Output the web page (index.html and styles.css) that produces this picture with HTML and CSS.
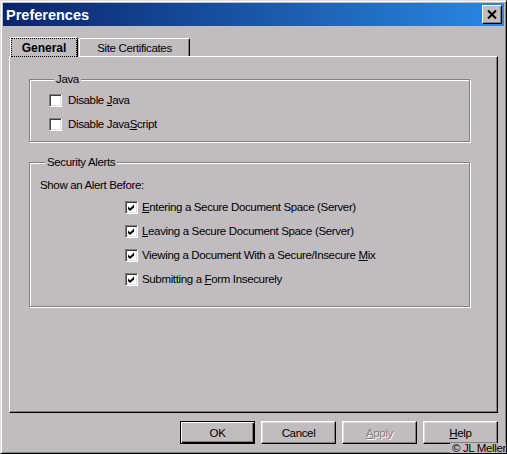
FILE: index.html
```
<!DOCTYPE html>
<html lang="en">
<head>
  <meta charset="UTF-8">
  <meta name="viewport" content="width=device-width, initial-scale=1.0">
  <title>Preferences</title>
  <link rel="stylesheet" href="styles.css">
</head>
<body>
  <div class="window">
    <div class="titlebar">
      <span class="title">Preferences</span>
      <span class="close-btn">
        <svg width="10" height="9" viewBox="0 0 10 9"><path d="M1 0.5 L9 8.5 M9 0.5 L1 8.5" stroke="#000" stroke-width="2"/></svg>
      </span>
    </div>

    <div class="content">
      <div class="tabs">
        <div class="tab active"><span class="focus">General</span></div>
        <div class="tab site">Site Certificates</div>
      </div>

      <div class="panel">
        <fieldset class="group group-java">
          <legend>Java</legend>
          <label class="option"><span class="check"></span><span>Disable <u>J</u>ava</span></label>
          <label class="option"><span class="check"></span><span>Disable Java<u>S</u>cript</span></label>
        </fieldset>

        <fieldset class="group group-alerts">
          <legend>Security Alerts</legend>
          <div class="intro">Show an Alert Before:</div>
          <div class="alert-list">
            <label class="option"><span class="check"><svg width="9" height="9" viewBox="0 0 9 9"><path d="M1 3.5 L3 5.5 L7 1.5 V4.5 L3 8 L1 6 Z"/></svg></span><span><u>E</u>ntering a Secure Document Space (Server)</span></label>
            <label class="option"><span class="check"><svg width="9" height="9" viewBox="0 0 9 9"><path d="M1 3.5 L3 5.5 L7 1.5 V4.5 L3 8 L1 6 Z"/></svg></span><span><u>L</u>eaving a Secure Document Space (Server)</span></label>
            <label class="option"><span class="check"><svg width="9" height="9" viewBox="0 0 9 9"><path d="M1 3.5 L3 5.5 L7 1.5 V4.5 L3 8 L1 6 Z"/></svg></span><span>Viewing a Document With a Secure/Insecure <u>M</u>ix</span></label>
            <label class="option"><span class="check"><svg width="9" height="9" viewBox="0 0 9 9"><path d="M1 3.5 L3 5.5 L7 1.5 V4.5 L3 8 L1 6 Z"/></svg></span><span>Submitting a <u>F</u>orm Insecurely</span></label>
          </div>
        </fieldset>
      </div>

      <div class="buttons">
        <button class="btn default">OK</button>
        <button class="btn">Cancel</button>
        <button class="btn" disabled><u>A</u>pply</button>
        <button class="btn"><u>H</u>elp</button>
      </div>
    </div>

    <div class="credit">© JL Meller</div>
  </div>
</body>
</html>
```

FILE: styles.css
```
* {
  box-sizing: border-box;
}
body {
  margin: 0;
  font-family: "Liberation Sans", Arial, sans-serif;
  font-size: 11.5px;
  letter-spacing: -0.35px;
  color: #000;
  background: #c0bcc0;
}
.window {
  position: relative;
  width: 507px;
  height: 454px;
  overflow: hidden;
  background: #c0bcc0;
  border: 1px solid;
  border-color: #dfdfdf #000 #000 #dfdfdf;
  box-shadow: inset 1px 1px #fff, inset -1px -1px #808080;
  padding: 2px;
  display: flex;
  flex-direction: column;
}
.titlebar {
  height: 23px;
  background: linear-gradient(to right, #0a246a, #2a88e4);
  display: flex;
  align-items: center;
  justify-content: space-between;
  padding: 0 2px 0 3px;
}
.title {
  color: #fff;
  font: bold 14.5px "Liberation Sans", Arial, sans-serif;
  letter-spacing: 0;
}
.close-btn {
  width: 20px;
  height: 19px;
  background: #c0bcc0;
  border: 1px solid;
  border-color: #fff #000 #000 #fff;
  box-shadow: inset -1px -1px #808080;
  display: flex;
  align-items: center;
  justify-content: center;
}
.content {
  flex: 1;
  padding: 11px 6px 0;
  display: flex;
  flex-direction: column;
}
.tabs {
  display: flex;
  align-items: flex-end;
  height: 19px;
  padding-left: 1px;
}
.tab {
  height: 18px;
  border: 1px solid;
  border-bottom: none;
  border-color: #fff #000 #000 #fff;
  border-radius: 2px 2px 0 0;
  box-shadow: inset -1px 0 #808080;
  display: flex;
  align-items: center;
  justify-content: center;
}
.tab.site {
  width: 111px;
  margin-left: 1px;
}
.tab.active {
  position: relative;
  z-index: 1;
  width: 68px;
  height: 20px;
  margin-bottom: -1px;
  background: #c0bcc0;
  box-shadow: none;
  font: bold 12px "Liberation Sans", Arial, sans-serif;
  letter-spacing: 0;
}
.focus {
  width: 100%;
  height: 100%;
  border: 1px dotted #000;
  display: flex;
  align-items: center;
  justify-content: center;
}
.panel {
  height: 357px;
  border: 1px solid;
  border-color: #fff #000 #000 #fff;
  box-shadow: inset -1px -1px #808080;
  padding: 15px 0 0 19px;
}
.group {
  width: 441px;
  min-width: 0;
  margin: 0;
  border: 1px solid #808080;
  box-shadow: inset 1px 1px #fff, 1px 1px #fff;
}
.group legend {
  margin-left: 5px;
  padding: 0 2px;
  line-height: 14px;
  background: #c0bcc0;
}
.group-java {
  padding: 7px 0 9px 19px;
  display: flex;
  flex-direction: column;
  gap: 9px;
}
.group-alerts {
  margin-top: 13px;
  padding: 9px 0 19px 10px;
}
.intro {
  line-height: 15px;
}
.alert-list {
  margin: 7px 0 0 85px;
  display: flex;
  flex-direction: column;
  gap: 9px;
}
.option {
  display: flex;
  align-items: center;
  height: 15px;
  line-height: 15px;
}
.check {
  flex: none;
  width: 13px;
  height: 13px;
  margin-right: 6px;
  background: #fff;
  border: 1px solid;
  border-color: #808080 #fff #fff #808080;
  box-shadow: inset 1px 1px #404040, inset -1px -1px #dfdfdf;
}
.alert-list .check {
  margin-right: 4px;
}
.check svg {
  display: block;
  margin: 1px;
}
.buttons {
  display: flex;
  justify-content: flex-end;
  gap: 6px;
  margin-top: 8px;
}
.btn {
  width: 75px;
  height: 23px;
  padding: 0;
  font: inherit;
  letter-spacing: inherit;
  color: #000;
  background: #c0bcc0;
  border: 1px solid;
  border-color: #fff #000 #000 #fff;
  box-shadow: inset -1px -1px #808080, inset 1px 1px #dfdfdf;
}
.btn.default {
  border-color: #000;
  box-shadow: inset 1px 1px #fff, inset -1px -1px #000, inset -2px -2px #808080;
}
.btn:disabled {
  color: #808080;
  text-shadow: 1px 1px #fff;
}
.credit {
  position: absolute;
  right: 0;
  bottom: 0;
  height: 10px;
  padding-left: 2px;
  white-space: nowrap;
  font-size: 11.5px;
  line-height: 10px;
  background: #c0bcc0;
}
```
